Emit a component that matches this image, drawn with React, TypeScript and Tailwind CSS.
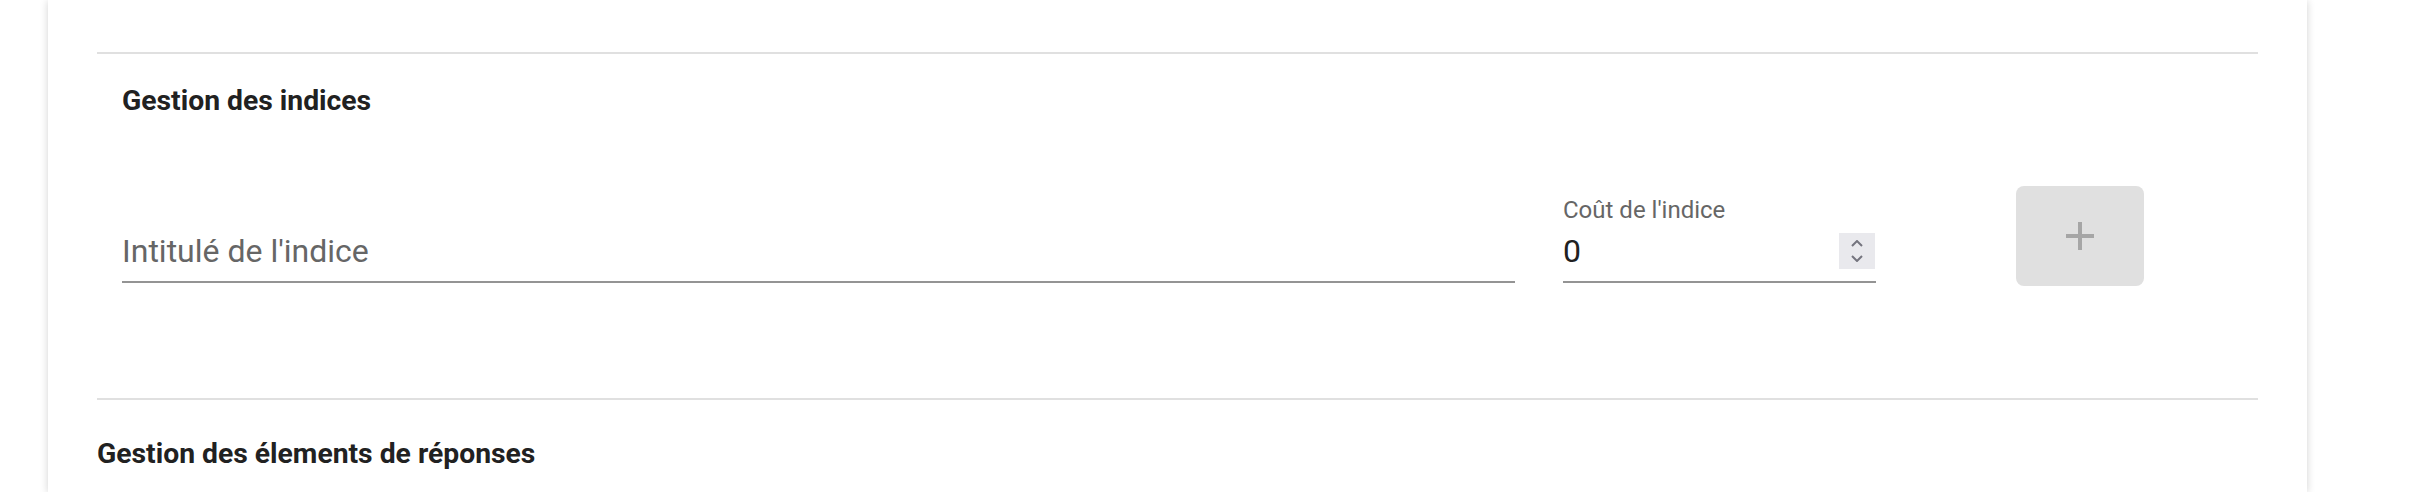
import React from 'react';

function PlusIcon() {
  return (
    <svg width="48" height="48" viewBox="0 0 24 24" fill="#a6a6a6" aria-hidden="true">
      <path d="M19 13h-6v6h-2v-6H5v-2h6V5h2v6h6v2z" />
    </svg>
  );
}

function Spinner() {
  return (
    <div className="flex flex-col items-center justify-center gap-[8px] w-[36px] h-[36px] bg-[#e9e9ed]">
      <svg width="12" height="7" viewBox="0 0 12 7" fill="none" stroke="#74747e" strokeWidth="2">
        <path d="M1 6l5-5 5 5" />
      </svg>
      <svg width="12" height="7" viewBox="0 0 12 7" fill="none" stroke="#74747e" strokeWidth="2">
        <path d="M1 1l5 5 5-5" />
      </svg>
    </div>
  );
}

export default function App() {
  return (
    <div className="h-[492px] overflow-hidden bg-white font-['Roboto',sans-serif]">
      <div className="ml-[48px] w-[2259px] min-h-[492px] bg-white shadow-[0_1px_8px_rgba(0,0,0,0.18)]">
        <div className="px-[49px] pt-[52px]">
          {/* Hints section */}
          <div className="h-[2px] bg-[#e0e0e0]" />
          <div className="pl-[25px]">
            <h3 className="mt-[29px] text-[28.3px] leading-[36px] font-bold text-[#212121]">
              Gestion des indices
            </h3>

            <div className="mt-[67px] flex items-end h-[100px]">
              {/* Hint title */}
              <div className="w-[1393px] mb-[3px]">
                <div className="text-[32px] leading-[38px] pt-[2px] pb-[11px] border-b-2 border-[#949494] text-[#666666]">
                  Intitulé de l'indice
                </div>
              </div>

              {/* Hint cost */}
              <div className="ml-[48px] w-[313px] mb-[3px] flex flex-col">
                <div className="text-[24px] leading-[28px] text-[#666666]">Coût de l'indice</div>
                <div className="mt-[6px] flex items-start justify-between pt-[2px] pb-[11px] border-b-2 border-[#949494]">
                  <span className="text-[32px] leading-[38px] text-[#212121]">0</span>
                  <div className="mt-[1px] mr-[1px]">
                    <Spinner />
                  </div>
                </div>
              </div>

              <button className="ml-[140px] w-[128px] h-[100px] rounded-[8px] bg-[#e0e0e0] flex items-center justify-center">
                <PlusIcon />
              </button>
            </div>
          </div>

          <div className="mt-[112px] h-[2px] bg-[#e0e0e0]" />
          <h3 className="mt-[36px] text-[28.3px] leading-[36px] font-bold text-[#212121]">
            Gestion des élements de réponses
          </h3>
        </div>
      </div>
    </div>
  );
}
